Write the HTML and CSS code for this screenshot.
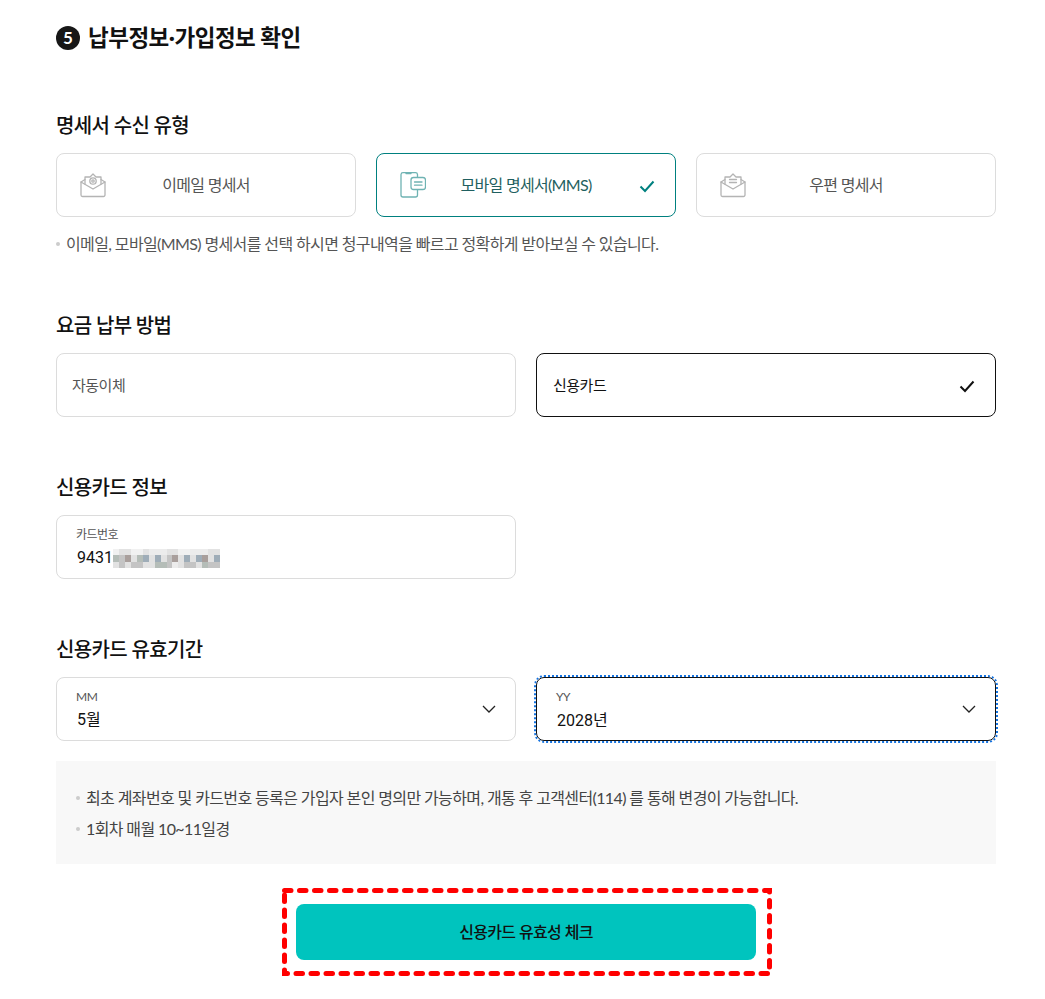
FILE: index.html
```html
<!DOCTYPE html>
<html lang="ko">
<head>
<meta charset="utf-8">
<title>납부정보·가입정보 확인</title>
<link rel="stylesheet" href="styles.css">
</head>
<body>
<main class="page">
  <h2 class="title"><span class="num">5</span>납부정보·가입정보 확인</h2>

  <section class="sec sec-bill">
    <h3 class="label">명세서 수신 유형</h3>
    <div class="row three">
      <div class="opt">
        <svg class="ico" viewBox="0 0 26 26" fill="none" stroke="#b4b4b4" stroke-width="1.3" stroke-linejoin="round" stroke-linecap="round">
          <path d="M5 7.500 1 10v13a1.500 1.500 0 0 0 1.500 1.500h21A1.500 1.500 0 0 0 25 23V10l-4-2.500"/>
          <path d="M1 10l12 7 12-7"/>
          <path d="M5 12V5h5l3-3 3 3h5v7"/>
          <circle cx="13" cy="9" r="3.200"/><circle cx="13" cy="9" r="1.200"/>
        </svg>
        <span class="opt-text">이메일 명세서</span>
      </div>
      <div class="opt on-teal">
        <svg class="ico" viewBox="0 0 26 26" fill="none" stroke="#6fb3b3" stroke-width="1.300" stroke-linejoin="round" stroke-linecap="round">
          <path d="M17.500 5V2.500A2 2 0 0 0 15.500 0.700H3A2 2 0 0 0 1 2.500V23a2 2 0 0 0 2 2h12.500a2 2 0 0 0 2-2v-5"/>
          <path d="M6 1.500h5"/>
          <rect x="11" y="5.500" width="14.500" height="12" rx="2.500" fill="#fff"/>
          <path d="M14.500 10h7.500M14.500 13.200h7.500"/>
        </svg>
        <span class="opt-text">모바일 명세서(MMS)</span>
        <svg class="check" viewBox="0 0 16 14" fill="none" stroke="#00807f" stroke-width="2"><path d="M1.500 7.500 6 12 14.500 2.500"/></svg>
      </div>
      <div class="opt">
        <svg class="ico" viewBox="0 0 26 26" fill="none" stroke="#b4b4b4" stroke-width="1.300" stroke-linejoin="round" stroke-linecap="round">
          <path d="M5 7.500 1 10v13a1.500 1.500 0 0 0 1.500 1.500h21A1.500 1.500 0 0 0 25 23V10l-4-2.500"/>
          <path d="M1 10l12 7 12-7"/>
          <path d="M5 12V5h5l3-3 3 3h5v7"/>
          <path d="M9.500 7.500h7M9.500 10.500h7"/>
        </svg>
        <span class="opt-text">우편 명세서</span>
      </div>
    </div>
    <p class="note note-bill">이메일, 모바일(MMS) 명세서를 선택 하시면 청구내역을 빠르고 정확하게 받아보실 수 있습니다.</p>
  </section>

  <section class="sec sec-pay">
    <h3 class="label">요금 납부 방법</h3>
    <div class="row two">
      <div class="pay">자동이체</div>
      <div class="pay on-dark">신용카드
        <svg class="check" viewBox="0 0 16 14" fill="none" stroke="#111" stroke-width="2"><path d="M1.500 7.500 6 12 14.500 2.500"/></svg>
      </div>
    </div>
  </section>

  <section class="sec sec-card">
    <h3 class="label">신용카드 정보</h3>
    <div class="row two">
      <div class="field">
        <span class="mini">카드번호</span>
        <span class="val">9431<svg class="mask" viewBox="0 0 18 3" shape-rendering="crispEdges" preserveAspectRatio="none">
          <g fill="#e2e2e2"><rect x="0" y="0" width="18" height="3"/></g>
          <g fill="#f1f1f1"><rect x="0" y="0" width="1" height="1"/><rect x="3" y="0" width="2" height="1"/><rect x="11" y="0" width="2" height="1"/></g>
          <g fill="#b5bdb8"><rect x="0" y="1" width="1" height="1"/><rect x="4" y="1" width="1" height="1"/><rect x="7" y="2" width="2" height="1"/><rect x="15" y="2" width="1" height="1"/></g>
          <g fill="#a99f9c"><rect x="2" y="1" width="1" height="1"/><rect x="10" y="1" width="1" height="1"/><rect x="15" y="1" width="1" height="1"/></g>
          <g fill="#9fadb8"><rect x="5" y="1" width="1" height="1"/><rect x="7" y="1" width="1" height="1"/><rect x="12" y="1" width="1" height="1"/><rect x="14" y="1" width="1" height="1"/><rect x="17" y="1" width="1" height="1"/></g>
          <g fill="#c4c4c4"><rect x="1" y="1" width="1" height="2"/><rect x="3" y="2" width="2" height="1"/><rect x="9" y="1" width="1" height="2"/><rect x="12" y="2" width="2" height="1"/><rect x="16" y="2" width="2" height="1"/></g>
          <g fill="#ececec"><rect x="6" y="0" width="3" height="1"/><rect x="13" y="0" width="3" height="1"/><rect x="10" y="2" width="1" height="1"/></g>
        </svg></span>
      </div>
      <div></div>
    </div>
  </section>

  <section class="sec sec-exp">
    <h3 class="label">신용카드 유효기간</h3>
    <div class="row two">
      <div class="field sel">
        <span class="mini">MM</span>
        <span class="val">5월</span>
        <svg class="chev" viewBox="0 0 14 8" fill="none" stroke="#222" stroke-width="1.300"><path d="M1 1l6 6 6-6"/></svg>
      </div>
      <div class="field sel focus">
        <span class="mini">YY</span>
        <span class="val">2028년</span>
        <svg class="chev" viewBox="0 0 14 8" fill="none" stroke="#222" stroke-width="1.300"><path d="M1 1l6 6 6-6"/></svg>
      </div>
    </div>
  </section>

  <div class="info">
    <p class="note">최초 계좌번호 및 카드번호 등록은 가입자 본인 명의만 가능하며, 개통 후 고객센터(114) 를 통해 변경이 가능합니다.</p>
    <p class="note">1회차 매월 10~11일경</p>
  </div>

  <div class="cta-frame">
    <button class="cta" type="button">신용카드 유효성 체크</button>
    <svg class="dash" viewBox="0 0 490 88" fill="none" stroke="#f00" stroke-width="5" stroke-linecap="round"><rect x="2.500" y="2.500" width="485" height="83" stroke-dasharray="6.500 8.500"/></svg>
  </div>
</main>
</body>
</html>
```

FILE: styles.css
```css
* { box-sizing: border-box; }
html, body { margin: 0; padding: 0; background: #fff; }
body {
  font-family: Lato, "Noto Sans CJK KR", "Noto Sans", sans-serif;
  color: #111;
  letter-spacing: -0.620px;
}
.page { width: 1045px; height: 999px; padding: 22px 49px 0 56px; overflow: hidden; }

.title {
  display: flex; align-items: center; gap: 8px;
  margin: 0; height: 32px;
  font-size: 22.500px; font-weight: 700; line-height: 32px; color: #111;
  letter-spacing: -0.500px;
}
.num {
  width: 24px; height: 24px; border-radius: 50%;
  background: #171717; color: #fff;
  font-size: 17px; font-weight: 700; line-height: 24px; text-align: center;
  letter-spacing: 0;
}

.label { margin: 0 0 15px; height: 26px; font-size: 20px; font-weight: 500; line-height: 26px; color: #111; letter-spacing: -0.650px; }
.sec-bill { margin-top: 58px; }
.sec-pay { margin-top: 56px; }
.sec-card { margin-top: 57px; }
.sec-exp { margin-top: 57px; }

.row { display: grid; }
.three { grid-template-columns: repeat(3, 300px); column-gap: 20px; }
.two { grid-template-columns: repeat(2, 460px); column-gap: 20px; }

.opt, .pay, .field {
  position: relative; height: 64px;
  border: 1px solid #dcdcdc; border-radius: 8px; background: #fff;
}
.opt { display: flex; align-items: center; justify-content: center; padding-bottom: 2px; font-size: 16px; letter-spacing: -0.700px; color: #555; }
.ico { position: absolute; left: 23px; top: 18px; width: 26px; height: 26px; }
.on-teal { border-color: #00807f; color: #1f5f60; }
.opt .check { position: absolute; right: 20px; top: 25px; width: 16px; height: 14px; }

.pay { display: flex; align-items: center; padding: 0 0 2px 15px; font-size: 15px; letter-spacing: -0.500px; color: #555; }
.on-dark { padding-left: 16px; border-color: #111; color: #111; }
.pay .check { position: absolute; right: 20px; top: 25px; width: 16px; height: 14px; }

.note {
  position: relative; margin: 0; padding-left: 10px;
  font-size: 16px; line-height: 24px; color: #555;
}
.note::before {
  content: ""; position: absolute; left: 0; top: 10px;
  width: 4px; height: 4px; border-radius: 50%; background: #ccc;
}
.note-bill { margin-top: 15px; }

.field { padding: 11px 19px; }
.mini { display: block; height: 16px; font-size: 12px; line-height: 16px; color: #555; letter-spacing: -0.500px; }
.val { display: flex; align-items: center; height: 24px; margin-top: 3px; padding-left: 1px; font-family: Roboto, "Noto Sans CJK KR", sans-serif; font-size: 16px; line-height: 24px; color: #111; letter-spacing: 0; }
.mask { width: 107px; height: 19px; display: block; }
.chev { position: absolute; right: 19px; top: 27px; width: 14px; height: 8px; }
.focus { border-color: #111; outline: 2px dotted #1573e0; outline-offset: 0; }
.focus .val { margin-top: 4px; }

.info { margin-top: 20px; height: 103px; padding: 25px 20px; background: #f8f8f8; }
.info .note { margin-bottom: 7px; color: #444; }

.cta-frame { position: relative; width: 490px; height: 88px; margin: 24px 0 0 226px; padding: 16px 16px 16px 14px; }
.cta {
  display: block; width: 460px; height: 56px; padding: 0 0 2px; border: 0; border-radius: 8px;
  background: #00c4be; color: #111;
  font-family: "Noto Sans CJK KR", sans-serif; font-size: 16px; font-weight: 500; letter-spacing: -0.700px;
}
.dash { position: absolute; inset: 0; width: 490px; height: 88px; }
```
